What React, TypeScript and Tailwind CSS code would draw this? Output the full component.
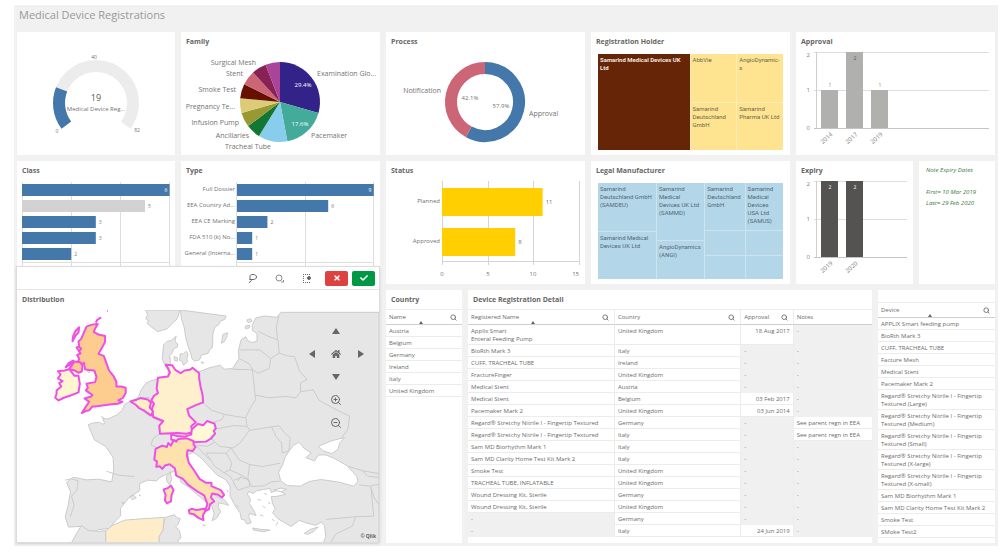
import React from "react";
import { FaCheck, FaHome, FaTimes } from "react-icons/fa";
import { Search, ZoomIn, ZoomOut } from "lucide-react";

const family = [
  { name: "Examination Glo...", value: 5, color: "#332288", x: 136, y: 26, anchor: "start" },
  { name: "Pacemaker", value: 3, color: "#44aa99", x: 130, y: 88, anchor: "start" },
  { name: "Tracheal Tube", value: 2, color: "#88ccee", x: 90, y: 99, anchor: "end" },
  { name: "Ancillaries", value: 1, color: "#117733", x: 68, y: 88, anchor: "end" },
  { name: "Infusion Pump", value: 1, color: "#999933", x: 58, y: 75, anchor: "end" },
  { name: "Pregnancy Te...", value: 1, color: "#ddcc77", x: 54, y: 59, anchor: "end" },
  { name: "Smoke Test", value: 1, color: "#661100", x: 55, y: 42, anchor: "end" },
  { name: "Stent", value: 1, color: "#cc6677", x: 62, y: 26, anchor: "end" },
  { name: "Surgical Mesh", value: 1, color: "#882255", x: 75, y: 15, anchor: "end" },
  { name: "", value: 1, color: "#aa4499", x: 0, y: 0, anchor: "end" },
] as const;

const classBars = [
  { value: 6, color: "#4477aa" },
  { value: 5, color: "#d2d2d2" },
  { value: 3, color: "#4477aa" },
  { value: 3, color: "#4477aa" },
  { value: 2, color: "#4477aa" },
];

const typeBars = [
  { name: "Full Dossier", value: 9 },
  { name: "EEA Country Ad...", value: 6 },
  { name: "EEA CE Marking", value: 2 },
  { name: "FDA 510 (k) No...", value: 1 },
  { name: "General (Interna...", value: 1 },
];

const countries = ["Austria", "Belgium", "Germany", "Ireland", "Italy", "United Kingdom"];

const registrations = [
  ["Applix Smart\nEnteral Feeding Pump", "United Kingdom", "18 Aug 2017", "-"],
  ["BioRth Mark 3", "Italy", "-", "-"],
  ["CUFF, TRACHEAL TUBE", "Ireland", "-", "-"],
  ["FractureFinger", "United Kingdom", "-", "-"],
  ["Medical Stent", "Austria", "-", "-"],
  ["Medical Stent", "Belgium", "03 Feb 2017", "-"],
  ["Pacemaker Mark 2", "United Kingdom", "03 Jun 2014", "-"],
  ["Regard® Stretchy Nitrile I - Fingertip Textured", "Germany", "-", "See parent regn in EEA"],
  ["Regard® Stretchy Nitrile I - Fingertip Textured", "Italy", "-", "See parent regn in EEA"],
  ["Sam MD Biorhythm Mark 1", "Italy", "-", "-"],
  ["Sam MD Clarity Home Test Kit Mark 2", "Italy", "-", "-"],
  ["Smoke Test", "United Kingdom", "-", "-"],
  ["TRACHEAL TUBE, INFLATABLE", "United Kingdom", "-", "-"],
  ["Wound Dressing Kit, Sterile", "Germany", "-", "-"],
  ["Wound Dressing Kit, Sterile", "United Kingdom", "-", "-"],
  ["-", "Germany", "-", "-"],
  ["-", "Italy", "24 Jun 2019", "-"],
];

const devices = [
  "APPLIX Smart feeding pump",
  "BioRth Mark 3",
  "CUFF, TRACHEAL TUBE",
  "Facture Mesh",
  "Medical Stent",
  "Pacemaker Mark 2",
  "Regard® Stretchy Nitrile I - Fingertip\nTextured (Large)",
  "Regard® Stretchy Nitrile I - Fingertip\nTextured (Medium)",
  "Regard® Stretchy Nitrile I - Fingertip\nTextured (Small)",
  "Regard® Stretchy Nitrile I - Fingertip\nTextured (X-large)",
  "Regard® Stretchy Nitrile I - Fingertip\nTextured (X-small)",
  "Sam MD Biorhythm Mark 1",
  "Sam MD Clarity Home Test Kit Mark 2",
  "Smoke Test",
  "SMoke Test2",
];

function point(cx: number, cy: number, r: number, turn: number) {
  const a = turn * Math.PI * 2;
  return `${cx + r * Math.sin(a)} ${cy - r * Math.cos(a)}`;
}

function arc(cx: number, cy: number, r: number, from: number, to: number) {
  const large = to - from > 0.5 ? 1 : 0;
  return `M${point(cx, cy, r, from)} A${r} ${r} 0 ${large} 1 ${point(cx, cy, r, to)}`;
}

function Panel({ title, className = "", children }: { title?: string; className?: string; children?: React.ReactNode }) {
  return (
    <section className={`flex min-w-0 flex-col overflow-hidden bg-white ${className}`}>
      {title && <h2 className="h-[18px] shrink-0 px-[5px] pt-1 text-[7px] leading-[12px] font-bold text-[#666]">{title}</h2>}
      {children}
    </section>
  );
}

function Gauge() {
  return (
    <svg viewBox="0 0 158 123" className="w-full fill-[#737373] text-[6px]">
      <path d={arc(79, 71, 37, -0.352, 0.352)} fill="none" stroke="#ececec" strokeWidth="12" />
      <path d={arc(79, 71, 37, -0.352, -0.19)} fill="none" stroke="#4477aa" strokeWidth="12" />
      <text x="77" y="27" textAnchor="middle" className="text-[5px]">40</text>
      <text x="40" y="101" textAnchor="middle" className="text-[5px]">0</text>
      <text x="120" y="100" textAnchor="middle" className="text-[5px]">82</text>
      <text x="79" y="69" textAnchor="middle" className="fill-[#595959] text-[9px]">19</text>
      <text x="79" y="79" textAnchor="middle">Medical Device Reg...</text>
    </svg>
  );
}

function FamilyPie() {
  const total = family.reduce((sum, f) => sum + f.value, 0);
  let start = 0;
  return (
    <svg viewBox="0 0 199 105" className="w-full fill-[#737373] text-[7px]">
      {family.map((f) => {
        const from = start;
        start += f.value / total;
        return <path key={f.color} d={`${arc(99, 52, 40, from, start)} L99 52 Z`} fill={f.color} />;
      })}
      {family.map((f) => (
        <text key={f.color} x={f.x} y={f.y} textAnchor={f.anchor}>{f.name}</text>
      ))}
      <text x="122" y="37" textAnchor="middle" className="fill-white text-[6px]">29.4%</text>
      <text x="119" y="76" textAnchor="middle" className="fill-white text-[6px]">17.6%</text>
    </svg>
  );
}

function ProcessDonut() {
  return (
    <svg viewBox="0 0 199 105" className="w-full fill-[#737373] text-[7px]">
      <path d={arc(99, 52, 34, 0, 0.579)} fill="none" stroke="#4477aa" strokeWidth="12" />
      <path d={arc(99, 52, 34, 0.579, 1)} fill="none" stroke="#cc6677" strokeWidth="12" />
      <text x="55" y="43" textAnchor="end">Notification</text>
      <text x="143" y="66">Approval</text>
      <text x="84" y="50" textAnchor="middle" className="text-[6px]">42.1%</text>
      <text x="115" y="58" textAnchor="middle" className="text-[6px]">57.9%</text>
    </svg>
  );
}

function YearBars({ width, top, color, bars, inside }: {
  width: number;
  top: number;
  color: string;
  bars: { year: string; value: number }[];
  inside: string;
}) {
  return (
    <svg viewBox={`0 0 ${width} 105`} className="w-full fill-[#808080] text-[6px]">
      {[2, 1, 0].map((tick) => {
        const y = top + (2 - tick) * 38;
        return (
          <g key={tick}>
            <path d={`M18 ${y + 0.5}H${width - 6}`} stroke={tick ? "#dedede" : "#c4c4c4"} />
            <text x="14" y={tick === 2 ? y + 5 : y + 2} textAnchor="end">{tick}</text>
          </g>
        );
      })}
      <path d={`M20.5 ${top}v76`} stroke="#cfcfcf" />
      {bars.map((bar, i) => {
        const x = 25 + i * 25;
        const y = top + 76 - bar.value * 38;
        return (
          <g key={bar.year}>
            <rect x={x} y={y} width="17" height={bar.value * 38} fill={color} />
            <text x={x + 9} y={bar.value === 2 ? y + 8 : y - 3} textAnchor="middle" fill={bar.value === 2 ? inside : "#808080"} className="text-[5px]">
              {bar.value}
            </text>
            <text textAnchor="end" transform={`translate(${x + 12} ${top + 83}) rotate(-42)`}>{bar.year}</text>
          </g>
        );
      })}
    </svg>
  );
}

function ClassChart() {
  return (
    <svg viewBox="0 0 158 87" className="w-full fill-[#808080] text-[5px]">
      <path d="M5.500 3V87M54.500 3V87M103.500 3V87M152.500 3V87M5 83.500H152" stroke="#dedede" />
      {classBars.map((bar, i) => (
        <g key={i}>
          <rect x="5" y={5 + i * 16} width={bar.value * 24.6} height="12" fill={bar.color} />
          {bar.value === 6 ? (
            <text x="149" y="13" textAnchor="middle" fill="#fff">6</text>
          ) : (
            <text x={8 + bar.value * 24.6} y={13 + i * 16}>{bar.value}</text>
          )}
        </g>
      ))}
    </svg>
  );
}

function TypeChart() {
  return (
    <svg viewBox="0 0 199 87" className="w-full fill-[#737373] text-[6px]">
      <path d="M55.500 3V87M124.500 3V87M192.500 3V87M55 83.500H192" stroke="#dedede" />
      {typeBars.map((bar, i) => (
        <g key={bar.name}>
          <rect x="56" y={5 + i * 16} width={bar.value * 15.2} height="12" fill="#4477aa" />
          <text x="54" y={12 + i * 16} textAnchor="end">{bar.name}</text>
          {bar.value === 9 ? (
            <text x="189" y="13" textAnchor="middle" fill="#fff" className="text-[5px]">9</text>
          ) : (
            <text x={59 + bar.value * 15.2} y={13 + i * 16} className="text-[5px]">{bar.value}</text>
          )}
        </g>
      ))}
    </svg>
  );
}

function StatusChart() {
  const bars = [
    { name: "Planned", value: 11 },
    { name: "Approved", value: 8 },
  ];
  return (
    <svg viewBox="0 0 199 105" className="w-full fill-[#737373] text-[6px]">
      <path d="M56.500 2V86M102.500 2V86M147.500 2V86M193.500 2V86M56 82.500H193" stroke="#d4d4d4" />
      {bars.map((bar, i) => (
        <g key={bar.name}>
          <rect x="56" y={9 + i * 40} width={bar.value * 9.15} height="28" fill="#ffcf02" />
          <text x="54" y={24 + i * 40} textAnchor="end">{bar.name}</text>
          <text x={59 + bar.value * 9.15} y={25 + i * 40}>{bar.value}</text>
        </g>
      ))}
      <text x="56" y="97" textAnchor="middle">0</text>
      <text x="102" y="97" textAnchor="middle">5</text>
      <text x="147" y="97" textAnchor="middle">10</text>
      <text x="193" y="97" textAnchor="end">15</text>
    </svg>
  );
}

function HolderTreemap() {
  return (
    <div className="mx-[7px] mt-1 mb-[5px] grid flex-1 grid-cols-[2fr_1fr_1fr] grid-rows-2 gap-px bg-[#feedb8] font-['Roboto',sans-serif] text-[6px] leading-[8px] text-[#6f6747] *:overflow-hidden *:bg-[#fee391] *:p-0.5">
      <div className="row-span-2 bg-[#662506]! font-bold text-[#f3e6e0]">Samarind Medical Devices UK Ltd</div>
      <div>AbbVie</div>
      <div className="whitespace-nowrap">AngioDynamic-<br />s</div>
      <div>Samarind Deutschland GmbH</div>
      <div>Samarind Pharma UK Ltd</div>
    </div>
  );
}

function ManufacturerTreemap() {
  return (
    <div className="mx-[7px] mt-1 mb-[5px] grid flex-1 grid-cols-[59fr_48fr_40fr_38fr] gap-px bg-[#cde4f0] font-['Roboto',sans-serif] text-[6px] leading-[8px] text-[#546873] *:grid *:gap-px *:*:overflow-hidden *:*:bg-[#b3d6e9] *:*:p-0.5">
      <div className="grid-rows-[1fr_1fr]">
        <div>Samarind Deutschland GmbH (SAMDEU)</div>
        <div>Samarind Medical Devices UK Ltd</div>
      </div>
      <div className="grid-rows-[3fr_2fr]">
        <div>Samarind Medical Devices UK Ltd (SAMMD)</div>
        <div>AngioDynamics (ANGI)</div>
      </div>
      <div className="grid-rows-[2fr_1fr_1fr]">
        <div>Samarind Deutschland GmbH</div>
        <div />
        <div />
      </div>
      <div className="grid-rows-[2fr_1fr_1fr]">
        <div>Samarind Medical Devices USA Ltd (SAMUS)</div>
        <div />
        <div />
      </div>
    </div>
  );
}

function EuropeMap() {
  return (
    <svg viewBox="21 60 1089 699" className="w-full" strokeLinejoin="round" role="img" aria-label="Distribution by country">
      <g fill="#e6e6e6" stroke="#cbcbcb" strokeWidth="3">
        {/* Scandinavia */}
        <path d="M408 60l6 14-6 12 8 6-4 8 14 12 18 13 14-4 14-4 16-17 12-10 6-10 4-20z" />
        <path d="M512 60l4 28 8 24 4 28 8 30 8 22 4 16 8 6 14-4 6-14 20-6 4-10 8-6 2-20 0-22 6-20 12-8 4-10 14-6 4-10z" />
        <path d="M462 165l10-10 14-4 14-12-4 16 8 6 0 10-12 6-4 12-8 8 2 10 0 18-18-3-6-16zM512 192l10 0 8-8 6 10-4 12 2 10-12 10-4-12-8-2zM494 200l10 4 0 10-10-2zM640 134l14-6-2 14-8 14-8 4zM575 216l8 2-4 4z" />
        {/* mainland */}
        <path d="M235 405l14-5 20-2 8 5 8-1-6-16 14 2 10-4 18-8 16-14 8-18 18-10 22-10 10-24 14-20 18-8 16-4 18-6 16-4-2-16-8-14 20-1 10 15 16 8 20-10 16-2 14 10 36-14 34-8 12 12 24-2 10-14 10-16-2-24 8-32 14-10 6 12 12 6 16-4 0-24-14-8 0-18 10-20 26-6 38 4 12-15h295v699H940l10-24-4-34-10-10-16 10-30-8-20-7-24 18-22-12-18-11-16-18 8-12-8-15-4-22 14 0 30-6-24-14-20 8-4-12-20 3-20 4-10 8-14-6-4 8 10 16-4 12 12 18 8 18-20-6-2 10 8 18-14 4-6-12-10-2-4-20-14-20-16-30 0-30-14-20-26-14-24-26-22-24-16-12-10-6-14 8 2 26 20 28 24 34 24 20 14 16 26 12 12 16-12-4-18-4-2 14 8 12-12 20-14 8 6-22-8-26-20-12-24-20-26-22-22-14-2-22-16-12-24 10-18 8-14 12-26-2-24 10 0 22-30 18-28 35 1 22-18 18-15 20-36 4-24 16-12-10-12-16-40 2-10-30 8-32 8-44-12-28 20-16 40 8 36-2 40 8 6-36-2-38-22-32-34-20z" />
        {/* north Africa */}
        <path d="M185 760l14-26 16-26 20 15 30 3 23-2 0 36zM465 686l14-6 16-4 6 8 11 4-6 16-8 8 12 12 4 22-8 6 0 10-58 0 0-20 12-20z" />
        {/* islands */}
        <path d="M470 562l12-16 4 24-6 16-8-10zM360 622l12-5 8 8-12 6zM336 638l8 3-4 3zM388 616l5 3zM885 732l18-12 24-7-14 14-18 8zM730 716l24 4 28 2-20 5-30-5zM580 706l7 3zM712 90l12-4 4 8-12 4zM708 108l14-2-2 8-12 2zM274 380l8 4" />
        <path d="M745 630l10 2M760 650l8 6M752 676l10 4M776 640l8 2M765 612l8 3M800 708l6-10M788 690l8 4M652 600l4 8M680 646l8 8" fill="none" />
      </g>
      <g fill="#fff" stroke="#cbcbcb" strokeWidth="3">
        <path d="M868 458l-16 10-12 16-12 18-8 24-12 22 6 26 20 14 40 2 26-14 36-6 54 8 44 12 12-14-2-14-30-34-40-22-24-10-22 0-12 18-26-10 16-14-22-14-6-10z" />
        <path d="M928 470l32-14 20-6 26-6-14 16-6 20-18 12-26-8zM794 602l20-6 18 3-16 8z" />
        <path d="M232 245l8-4-2 8z" />
      </g>
      <g fill="none" stroke="#cbcbcb" strokeWidth="3">
        <path d="M165 572l20-4 20 6-4 28-16 18 8 28-12 34M290 545l36 12 48 4M385 350l20 20 28 16 24 12M452 430l-22 18-6 18 16 8M452 430l34 4 14 20-26 16-34 4M395 325l20-2 12 6" />
        <path d="M535 358l24-14 20-6 28 24 38 12-8 16-26 8M645 374l34 6 30 4 14-30 16-24-4-38-6-52-60-2M730 240l16 10 34-14 4-30-32-26-62 0M690 206l30 16 10 18M784 206l26-16-4-40-32-12-26-14M805 150l-4-38 8-36" />
        <path d="M810 190l24 8 22 2 16 46 22 22-20 12 0 26-14 18-30-4-52 4-40-8M874 306l38-6 18 32 40 22 52 26-6 40-20 26M709 384l4 26-42-2-50 10-6-20M713 410l8 12 64-10 24-4 16 20 18 16-4 40-20 6-2-30-16-18-14-30" />
        <path d="M605 445l14 16 14 10 38 4 22-16 28-38M665 475l24 36 32 14 38 6 54-10M721 525l-6 44 12 22 38-2 20-12 26-2M665 475l-14 16 16 30-6 20 36 16 18 12M590 490l61 1M590 490l26 40 28 20 18-10M560 466l34 4 22-12M644 550l18 10 14 24M674 572l20-8 24 6 4 20-36 12-14-22M696 558l-10 16M600 510l-36-38" />
        <path d="M1018 530l44 14 48 8M1050 586l34 4 26-6M1084 590l12 36 14 20M1086 594l8 86-54 2-90 8M1040 682l-10 28-50 24-16 26M1060 544l16 16 34 4" />
      </g>
      <path d="M288 724l20-16 38-16 52-4 66-4-4 38-12 20 0 20H288z" fill="#feedc8" stroke="#cbcbcb" strokeWidth="3" />
      {/* selected countries */}
      <g stroke="#ee4fe4" strokeWidth="6">
        <path d="M230 110l16-6 18-2-8 14-4 10 14 8 20 4 0 18-10 18-10 18 16 6 8 22 8 22 14 18 8 16 0 14 14 0 14 4 0 16-8 14-14 8 12 4-14 6-24 2-28 4-16 2-8 0-10 12-10 2-12 6 10-16 12-18-14-10 20-6 4-4-20-14 6-8-4-12 26-5 4-16-6-18-8-2-20-2-4-20-14 12-8-6 8-18-6-12 10-4-12-18 8-4-2-14 8-8z" fill="#fdcc8f" />
        <path d="M178 238l8-12 8-11 18 2 6 12-2 16-10 4-14-8z" fill="#fdcc8f" />
        <path d="M178 238l-14 4-20 2 8 10-8 12 14 8-10 6 6 10-14 12 0 10-4 12 10 8 16-8 18-6 26-10 4-26-4-24-12 0-8-10z" fill="#fff5d0" />
        <path d="M168 232l8-12 14-8-2 8zM188 154l2-16 6-14 12-12-2 16-8 8zM258 98l4-8 12-8M206 170l8 6-6 8M292 63h2" fill="#fdcc8f" />
        <path d="M468 225l20 1 9 14 16 10 12-8 16-2 8-6 10 8 10 8 0 16 4 24 6 24 2 24-22 8-26 12 6 20 20 20-14 12 4 18-18 4-28-2-52 2-2-24 12-14-30-12-4-26 6-14-8-10 8-14 12-8-4-14 4-32 30-4 6-12-6-14z" fill="#fef0cc" />
        <path d="M362 335l16-4 14-6 22 4 10 10-4 14 10 12-6 12-20-14-16-8-10-10z" fill="#fff0c4" />
        <path d="M485 435l18 4 22 2 20-6 2-16 18-16 16 4 12-13 22 8 4 14-6 8 4 8-14 16-14 8-36 2-26-8-24 4-18-4z" fill="#fff9d8" />
        <path d="M438 478l20-10 14 4 4-12 8 8 8-16 8 4 6-8 26-2 20 8 0 10 6 8-8 12-16-2-2 16 6 22 18 26 14 22 20 12 16 0 0 10 28 12 10 14-6 8-12-8-18-4-4 12 10 12-12 8-4 16-12 6 8-22-10-26-20-12-28-20-16-18-20-10-4-22-16-12-14 4-8 10-8-8-10 2 2-16-8-6z" fill="#fee2ae" />
        <path d="M538 662l8-4 16 4 22-4 4 6-8 14 2 14-14-6-16-12-12-2zM462 600l12-4 10-8 8 14-6 14-2 20-12 6-6-10 2-16z" fill="#fee2ae" />
      </g>
    </svg>
  );
}

function MapPanel() {
  return (
    <section className="relative -ml-px flex flex-1 flex-col overflow-hidden border border-[#dcdcdc] bg-white shadow-sm">
      <div className="flex h-[23px] shrink-0 items-center justify-end border-b border-[#e6e6e6] pr-1 text-[#666]">
        <button aria-label="Lasso selection" className="mr-[18px]">
          <svg viewBox="0 0 9 9" className="size-[9px] fill-none stroke-current">
            <path d="M2 5.500V2.500C2 1 3 .5 5 .5S8.500 1.500 8.500 3 7 5.500 5 5.500H1.500M3.500 5.500C3.500 7 2.500 8 1 8.500" />
          </svg>
        </button>
        <button aria-label="Circle selection" className="mr-[18px] text-[#8c8c8c]">
          <svg viewBox="0 0 9 9" className="size-[9px] fill-none stroke-current">
            <circle cx="4" cy="4" r="3" />
            <path d="M6 8h2.500V6" />
          </svg>
        </button>
        <button aria-label="Selection options" className="mr-[13px]">
          <svg viewBox="0 0 10 9" className="h-[9px] w-[10px] fill-none stroke-current">
            <path d="M1 .5H9M1.500 0V9M1 8.500H8" strokeDasharray="1 1" />
            <circle cx="7" cy="4" r="1.500" className="fill-current" />
          </svg>
        </button>
        <button aria-label="Cancel" className="mr-1 flex h-[15px] w-[23px] items-center justify-center rounded-xs bg-[#dc423f] text-white">
          <FaTimes className="size-2" />
        </button>
        <button aria-label="Confirm" className="flex h-[15px] w-[23px] items-center justify-center rounded-xs bg-[#009845] text-white">
          <FaCheck className="size-2" />
        </button>
      </div>
      <h2 className="h-5 shrink-0 px-[5px] pt-1 text-[7px] leading-[12px] font-bold text-[#666]">Distribution</h2>
      <EuropeMap />
      <div className="absolute top-[52px] right-[6px] grid w-[73px] grid-cols-3 place-items-center text-[#666] *:flex *:h-[23px] *:items-center">
        <button aria-label="Pan up" className="col-start-2">
          <svg viewBox="0 0 8 6" className="h-1.5 w-2 fill-current"><path d="M4 0l4 6H0z" /></svg>
        </button>
        <button aria-label="Pan left" className="col-start-1 row-start-2">
          <svg viewBox="0 0 6 8" className="h-2 w-1.5 fill-current"><path d="M0 4l6-4v8z" /></svg>
        </button>
        <button aria-label="Reset view" className="row-start-2"><FaHome className="size-2.5" /></button>
        <button aria-label="Pan right" className="row-start-2">
          <svg viewBox="0 0 6 8" className="h-2 w-1.5 fill-current"><path d="M6 4L0 0v8z" /></svg>
        </button>
        <button aria-label="Pan down" className="col-start-2">
          <svg viewBox="0 0 8 6" className="h-1.5 w-2 fill-current"><path d="M4 6l4-6H0z" /></svg>
        </button>
        <button aria-label="Zoom in" className="col-start-2"><ZoomIn className="size-3" /></button>
        <button aria-label="Zoom out" className="col-start-2"><ZoomOut className="size-3" /></button>
      </div>
      <span className="absolute right-[3px] bottom-0.5 text-[5px] leading-[8px] font-bold text-[#595959]">© Qlik</span>
    </section>
  );
}

function HeadCell({ label, search = true, sorted = false, border = false }: {
  label: string;
  search?: boolean;
  sorted?: boolean;
  border?: boolean;
}) {
  return (
    <th className={`relative h-[15px] border-b border-b-[#cfcfcf] px-[3px] font-normal ${border ? "border-r border-r-[#ececec]" : ""}`}>
      <div className="flex items-center justify-between">
        {label}
        {search && <button aria-label={`Search ${label}`} className="pr-0.5"><Search className="size-[7px]" strokeWidth={3} /></button>}
      </div>
      {sorted && <span className="absolute bottom-0 left-[43%] size-0 border-x-2 border-b-3 border-x-transparent border-b-[#666]" />}
    </th>
  );
}

const tableClass = "w-full table-fixed border-separate border-spacing-0 text-left text-[6px] leading-[8px] text-[#6b6b6b]";
const cellClass = "h-3 overflow-hidden border-b border-b-[#ececec] px-[3px] pt-0.5 pb-px align-top whitespace-pre";

function DetailTable() {
  return (
    <table className={tableClass}>
      <colgroup>
        <col className="w-4/11" />
        <col className="w-5/16" />
        <col className="w-[13%]" />
        <col />
      </colgroup>
      <thead>
        <tr>
          <HeadCell label="Registered Name" sorted border />
          <HeadCell label="Country" border />
          <HeadCell label="Approval" border />
          <HeadCell label="Notes" search={false} />
        </tr>
      </thead>
      <tbody>
        {registrations.map((row, i) => (
          <tr key={i}>
            {row.map((cell, j) => (
              <td
                key={j}
                className={`${cellClass} ${cell === "-" ? "bg-[#f0f0f0] border-b-[#f0f0f0]!" : ""} ${j === 2 && cell !== "-" ? "text-right" : ""} ${j < 3 ? "border-r border-r-[#ececec]" : ""}`}
              >
                {cell}
              </td>
            ))}
          </tr>
        ))}
      </tbody>
    </table>
  );
}

function ListTable({ label, rows }: { label: string; rows: string[] }) {
  return (
    <table className={tableClass}>
      <thead>
        <tr>
          <HeadCell label={label} sorted />
        </tr>
      </thead>
      <tbody>
        {rows.map((row) => (
          <tr key={row}>
            <td className={cellClass}>{row}</td>
          </tr>
        ))}
      </tbody>
    </table>
  );
}

export default function App() {
  return (
    <div className="bg-white pt-[5px] pr-0.5 pb-3 pl-3.5 font-['Open_Sans','Noto_Sans',sans-serif]">
      <main className="bg-[#f1f1f1] px-[3px] pb-[3px]">
        <h1 className="h-[27px] px-0.5 pt-0.5 text-[11px] leading-[16px] text-[#999]">Medical Device Registrations</h1>
        <div className="grid grid-cols-[363fr_609fr] gap-1.5">
          <div className="flex min-w-0 flex-col">
            <div className="mb-1.5 grid min-h-[123px] grid-cols-[158fr_199fr] gap-1.5">
              <Panel><Gauge /></Panel>
              <Panel title="Family"><FamilyPie /></Panel>
            </div>
            <div className="grid min-h-[105px] grid-cols-[158fr_199fr] gap-1.5">
              <Panel title="Class"><ClassChart /></Panel>
              <Panel title="Type"><TypeChart /></Panel>
            </div>
            <MapPanel />
          </div>
          <div className="flex min-w-0 flex-col gap-1.5">
            <div className="grid min-h-[123px] grid-cols-3 gap-1.5">
              <Panel title="Process"><ProcessDonut /></Panel>
              <Panel title="Registration Holder"><HolderTreemap /></Panel>
              <Panel title="Approval">
                <YearBars
                  width={199}
                  top={2}
                  color="#b0b0ae"
                  inside="#595959"
                  bars={[{ year: "2014", value: 1 }, { year: "2017", value: 2 }, { year: "2019", value: 1 }]}
                />
              </Panel>
            </div>
            <div className="grid min-h-[123px] grid-cols-[199fr_199fr_117fr_76fr] gap-1.5">
              <Panel title="Status"><StatusChart /></Panel>
              <Panel title="Legal Manufacturer"><ManufacturerTreemap /></Panel>
              <Panel title="Expiry">
                <YearBars
                  width={117}
                  top={2}
                  color="#545352"
                  inside="#fff"
                  bars={[{ year: "2019", value: 2 }, { year: "2020", value: 2 }]}
                />
              </Panel>
              <Panel>
                <div className="px-[7px] pt-1 text-[6px] leading-[11px] text-[#3d7a45] italic">
                  <p className="mb-[11px]">Note Expiry Dates</p>
                  <p>First= 10 Mar 2019</p>
                  <p>Last= 29 Feb 2020</p>
                </div>
              </Panel>
            </div>
            <div className="grid min-h-[253px] flex-1 grid-cols-[76fr_404fr_117fr] gap-1.5">
              <Panel title="Country">
                <div className="mt-px border-t border-[#ececec]"><ListTable label="Name" rows={countries} /></div>
              </Panel>
              <Panel title="Device Registration Detail">
                <div className="mt-px border-t border-[#ececec]"><DetailTable /></div>
              </Panel>
              <Panel>
                <div className="mt-3 border-t border-[#ececec]"><ListTable label="Device" rows={devices} /></div>
              </Panel>
            </div>
          </div>
        </div>
      </main>
    </div>
  );
}
